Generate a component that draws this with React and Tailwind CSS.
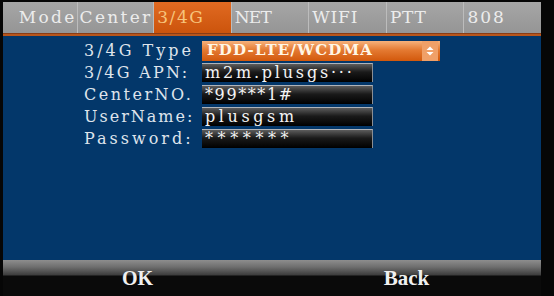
const tabs = [
  { label: "Mode", align: "justify-end", track: "tracking-[2.3px]" },
  { label: "Center", align: "justify-start pl-[2px]", track: "tracking-[2.3px]" },
  { label: "3/4G", active: true, track: "tracking-[1.6px]" },
  { label: "NET", track: "tracking-[-0.8px]" },
  { label: "WIFI", track: "tracking-[0.8px]" },
  { label: "PTT", track: "tracking-[0.7px]" },
  { label: "808", track: "tracking-[1.9px]" },
];

const fields = [
  { label: "3/4G Type", lt: "tracking-[3px]", value: "FDD-LTE/WCDMA", vt: "tracking-[1.2px]", select: true },
  { label: "3/4G APN:", lt: "tracking-[2.3px]", value: "m2m.plusgs\u00b7\u00b7\u00b7", vt: "tracking-[2.8px]" },
  { label: "CenterNO.", lt: "tracking-[2.5px]", value: "*99***1#", vt: "tracking-[1.6px]" },
  { label: "UserName:", lt: "tracking-[2px]", value: "plusgsm", vt: "tracking-[3.6px]" },
  { label: "Password:", lt: "tracking-[3px]", value: "*******", vt: "tracking-[4.6px]" },
];

const serif = { fontFamily: '"Liberation Serif", serif' };
const dvSerif = { fontFamily: '"DejaVu Serif", "Liberation Serif", serif' };

function Tab({ label, active, align, track }) {
  return (
    <div
      className={
        "flex-1 flex items-center h-full border-l border-[#bcbcbc] first:border-l-0 " +
        (align ? align : "justify-start pl-[3px]") +
        (active
          ? " bg-[linear-gradient(to_bottom,#e06a22,#cc540c)] text-[#f7c47c]"
          : " text-[#ececec]")
      }
      style={dvSerif}
    >
      <span className={"text-[17px] leading-none whitespace-nowrap " + track}>{label}</span>
    </div>
  );
}

function SpinArrow() {
  return (
    <div className="w-[16px] h-[20px] mr-[2px] bg-[#f0a068] flex items-center justify-center">
      <svg width="8" height="10" viewBox="0 0 8 10">
        <path d="M4 0.5 L7.5 4 H0.5 Z" fill="#fff" />
        <path d="M4 9.5 L7.5 6 H0.5 Z" fill="#fff" />
      </svg>
    </div>
  );
}

function Field({ label, lt, value, vt, select }) {
  return (
    <div className="flex items-center h-[19px]" style={dvSerif}>
      <div className={"w-[118px] text-[16px] text-[#dfe4ec] leading-none whitespace-nowrap " + lt}>
        {label}
      </div>
      {select ? (
        <div className="w-[238px] h-[20px] flex items-center justify-between bg-[linear-gradient(to_bottom,#f6b27c_0%,#e47a32_45%,#d2580c_100%)]">
          <span className={"pl-[5px] text-[15px] font-bold text-[#fff6e6] leading-none whitespace-nowrap " + vt}>
            {value}
          </span>
          <SpinArrow />
        </div>
      ) : (
        <div className="w-[171px] h-[19px] flex items-center border-t border-t-[#b0b4ba] border-r border-r-[#8a8e94] bg-[linear-gradient(to_bottom,#5c5c5c_0%,#1a1a1a_45%,#000_100%)]">
          <span className={"pl-[3px] text-[16px] text-[#f4f4f4] leading-none whitespace-nowrap " + vt}>
            {value}
          </span>
        </div>
      )}
    </div>
  );
}

export default function App() {
  return (
    <div className="w-[554px] h-[296px] bg-[#060606] flex flex-col pl-[3px] pr-[13px] pt-[2px]" style={serif}>
      <div className="h-[31px] flex bg-[linear-gradient(to_bottom,#a6a6a6,#959595)]">
        {tabs.map((t) => (
          <Tab key={t.label} {...t} />
        ))}
      </div>
      <div className="h-[3px] bg-[#b8561c] border-t border-[#8a3c14]" />
      <div className="flex-1 bg-[#03376a] pl-[81px] pt-[5px] flex flex-col gap-[3px]">
        {fields.map((f) => (
          <Field key={f.label} {...f} />
        ))}
      </div>
      <div className="h-[36px] flex bg-[linear-gradient(to_bottom,#8e8e8e_0px,#6e6e6e_7px,#3c3c3c_15px,#0a0a0a_16px,#0a0a0a_100%)] text-[#f0f0f0] pt-[8px]">
        <div className="flex-1 flex justify-center">
          <span className="text-[20px] font-bold leading-none">OK</span>
        </div>
        <div className="flex-1 flex justify-center">
          <span className="text-[21px] font-bold leading-none">Back</span>
        </div>
      </div>
    </div>
  );
}
